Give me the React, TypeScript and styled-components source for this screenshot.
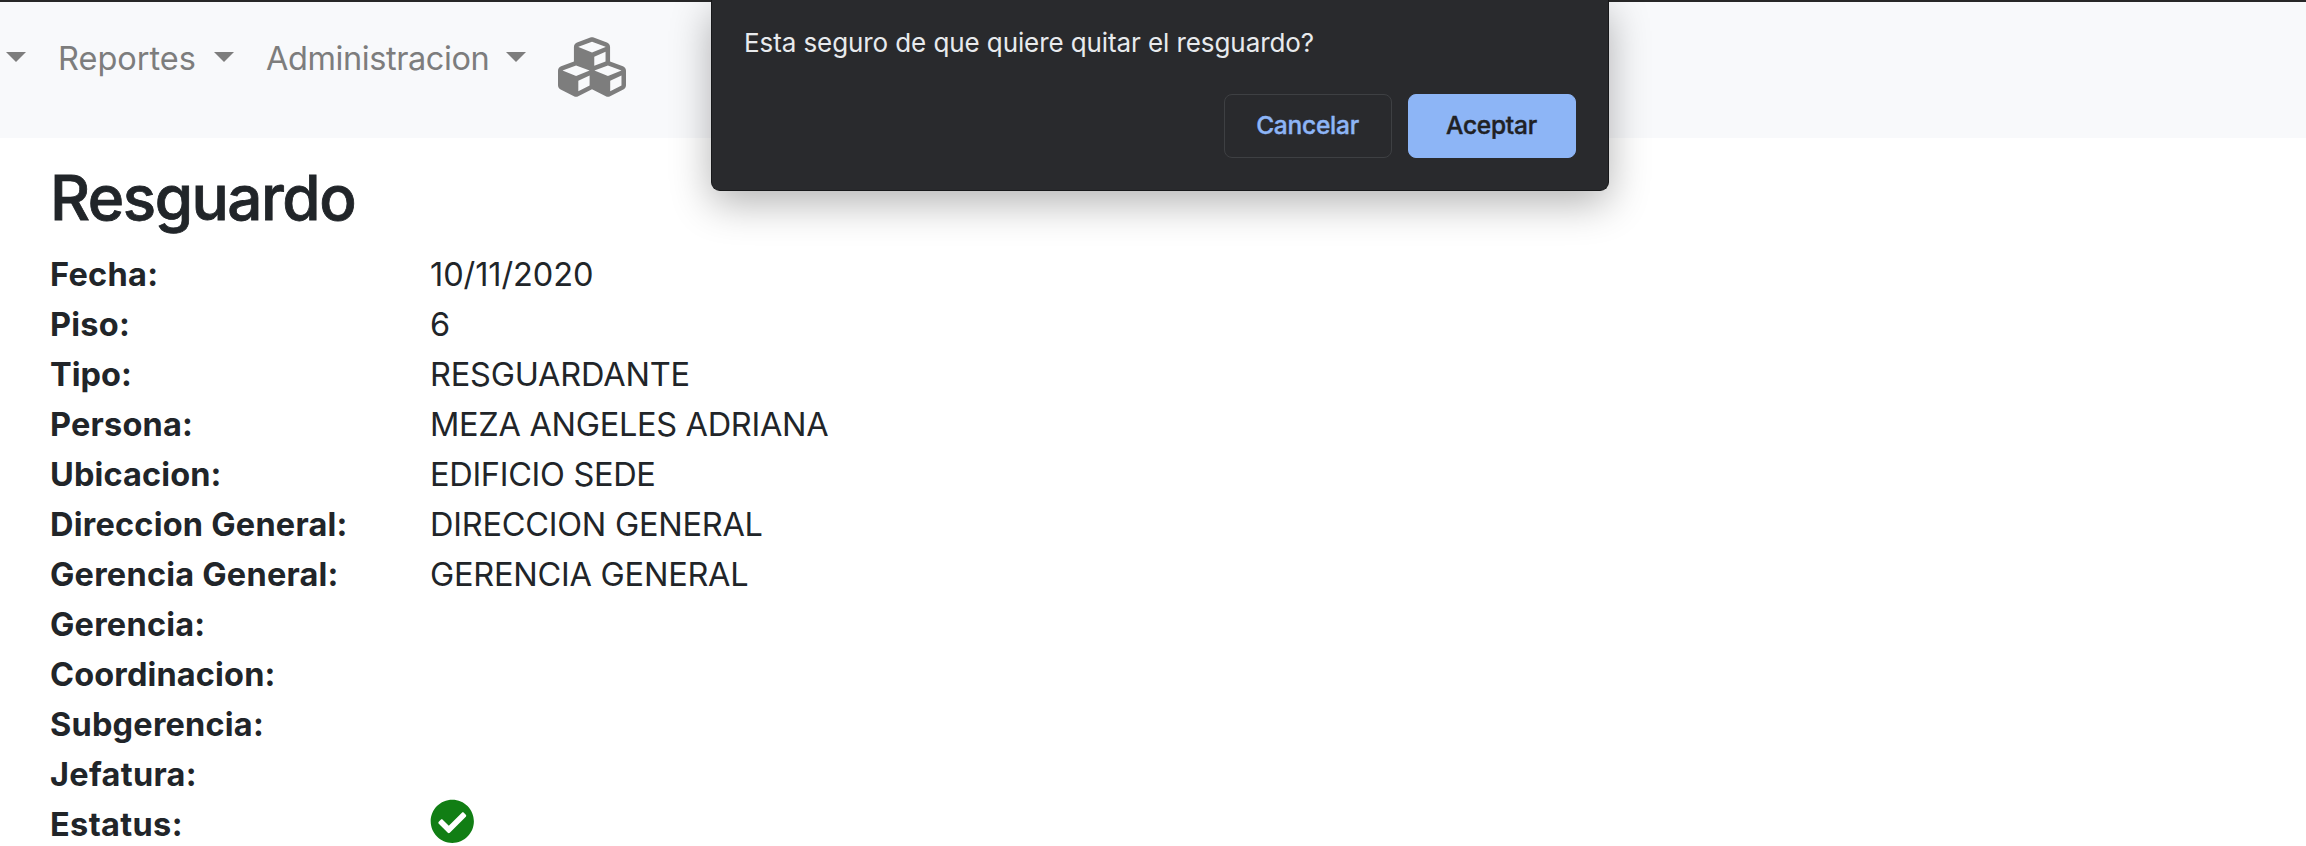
import React from "react";
import styled, { createGlobalStyle } from "styled-components";
import { FaCheckCircle, FaCubes } from "react-icons/fa";

const GlobalStyle = createGlobalStyle`
  *, *::before, *::after { box-sizing: border-box; }
  html, body { margin: 0; height: 100%; overflow: hidden; background: #fff; }
  body {
    font-family: Inter, "Liberation Sans", sans-serif;
    font-size: 32.5px;
    line-height: 52px;
    color: #212529;
  }
`;

const Page = styled.div`
  height: 846px;
  overflow: hidden;
`;

const Navbar = styled.nav`
  display: flex;
  align-items: flex-start;
  height: 138px;
  padding: 31px 0 0 6px;
  border-top: 2px solid #272728;
  background: #f8f9fb;
  color: #7d7d7d;
`;

const NavItem = styled.a<{ $width: number; $tracking?: number }>`
  display: flex;
  justify-content: space-between;
  width: ${(p) => p.$width}px;
  height: 50px;
  margin-right: 32px;
  letter-spacing: ${(p) => p.$tracking ?? 0}px;
  white-space: nowrap;

  &::after {
    content: "";
    width: 0;
    height: 0;
    margin: 19px 0 0 auto;
    border: 10px solid transparent;
    border-top-color: currentColor;
    border-bottom: 0;
  }
`;

const CubesIcon = styled(FaCubes)`
  display: block;
  width: 68px;
  height: 68px;
`;

const Content = styled.main`
  padding: 23px 50px 0;
`;

const Title = styled.h1`
  margin: 0 0 14px;
  font-size: 62px;
  font-weight: 500;
  line-height: 74px;
  letter-spacing: -1.5px;
  -webkit-text-stroke: 0.8px currentColor;
`;

const Details = styled.dl`
  margin: 0;
`;

const Row = styled.div`
  display: grid;
  grid-template-columns: 380px 1fr;
  height: 50px;
`;

const Term = styled.dt<{ $tracking: number }>`
  font-weight: 700;
  letter-spacing: ${(p) => p.$tracking}px;
`;

const Value = styled.dd<{ $tracking: number }>`
  margin: 0;
  letter-spacing: ${(p) => p.$tracking}px;
`;

const StatusIcon = styled(FaCheckCircle)`
  display: block;
  width: 44.6px;
  height: 44.6px;
  color: #117e14;
`;

const Dialog = styled.div`
  position: absolute;
  top: 0;
  left: 711px;
  width: 898px;
  height: 191px;
  padding: 23px 32px 0 32px;
  border: 1px solid #17181a;
  border-top: 0;
  border-radius: 0 0 9px 9px;
  background: #292a2d;
  color: #e8eaed;
  box-shadow: 0 12px 40px rgba(0, 0, 0, 0.3);
`;

const Message = styled.p`
  margin: 0 0 31px;
  font-size: 26px;
  line-height: 40px;
  letter-spacing: -0.09px;
`;

const Actions = styled.div`
  display: flex;
  justify-content: flex-end;
  gap: 16px;
`;

const Button = styled.button<{ $primary?: boolean }>`
  width: 168px;
  height: 64px;
  padding: 0 1px 2px 0;
  border: 1px solid ${(p) => (p.$primary ? "#8db5f6" : "#3e4043")};
  border-radius: 8px;
  background: ${(p) => (p.$primary ? "#8db5f6" : "transparent")};
  color: ${(p) => (p.$primary ? "#202124" : "#8db5f6")};
  font: 500 24.5px Inter, "Liberation Sans", sans-serif;
  letter-spacing: -0.25px;
  -webkit-text-stroke: 0.4px currentColor;
`;

type Detail = { term: string; value?: React.ReactNode; termTracking?: number; valueTracking?: number };

const details: Detail[] = [
  { term: "Fecha:", value: "10/11/2020", termTracking: 0.3, valueTracking: -0.08 },
  { term: "Piso:", value: "6" },
  { term: "Tipo:", value: "RESGUARDANTE", termTracking: 0, valueTracking: -0.2 },
  { term: "Persona:", value: "MEZA ANGELES ADRIANA", termTracking: 0.2, valueTracking: -0.3 },
  { term: "Ubicacion:", value: "EDIFICIO SEDE", termTracking: 0.12, valueTracking: -0.3 },
  { term: "Direccion General:", value: "DIRECCION GENERAL" },
  { term: "Gerencia General:", value: "GERENCIA GENERAL" },
  { term: "Gerencia:" },
  { term: "Coordinacion:", termTracking: 0.14 },
  { term: "Subgerencia:", termTracking: 0.2 },
  { term: "Jefatura:", termTracking: 0.3 },
  { term: "Estatus:", value: <StatusIcon />, termTracking: 0.35 },
];

export default function App() {
  return (
    <Page>
      <GlobalStyle />
      <Navbar>
        <NavItem $width={20} />
        <NavItem $width={176}>Reportes</NavItem>
        <NavItem $width={260} $tracking={-0.42}>Administracion</NavItem>
        <CubesIcon />
      </Navbar>
      <Content>
        <Title>Resguardo</Title>
        <Details>
          {details.map((d) => (
            <Row key={d.term}>
              <Term $tracking={d.termTracking ?? 0.22}>{d.term}</Term>
              <Value $tracking={d.valueTracking ?? -0.24}>{d.value}</Value>
            </Row>
          ))}
        </Details>
      </Content>
      <Dialog role="dialog">
        <Message>Esta seguro de que quiere quitar el resguardo?</Message>
        <Actions>
          <Button>Cancelar</Button>
          <Button $primary>Aceptar</Button>
        </Actions>
      </Dialog>
    </Page>
  );
}
